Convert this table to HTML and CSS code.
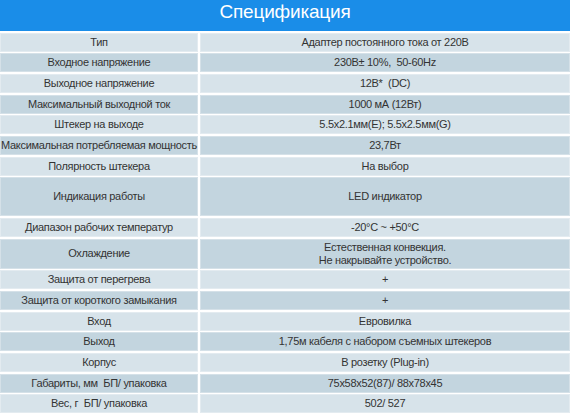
FILE: index.html
```html
<!DOCTYPE html>
<html lang="ru">
<head>
<meta charset="utf-8">
<link rel="stylesheet" href="styles.css">
</head>
<body>
<div class="spec">
  <h1 class="spec-title">Спецификация</h1>
  <div class="spec-grid">
    <div class="cell lt">Тип</div><div class="cell lt">Адаптер постоянного тока от 220В</div>
    <div class="cell dk">Входное напряжение</div><div class="cell dk">230В± 10%,&nbsp; 50-60Hz</div>
    <div class="cell lt">Выходное напряжение</div><div class="cell lt">12В*&nbsp; (DC)</div>
    <div class="cell dk">Максимальный выходной ток</div><div class="cell dk">1000 мА (12Вт)</div>
    <div class="cell lt">Штекер на выходе</div><div class="cell lt">5.5x2.1мм(E); 5.5x2.5мм(G)</div>
    <div class="cell dk">Максимальная потребляемая мощность</div><div class="cell dk">23,7Вт</div>
    <div class="cell lt">Полярность штекера</div><div class="cell lt">На выбор</div>
    <div class="cell dk tall">Индикация работы</div><div class="cell dk tall">LED индикатор</div>
    <div class="cell lt">Диапазон рабочих температур</div><div class="cell lt">-20°C ~ +50°C</div>
    <div class="cell dk mid">Охлаждение</div><div class="cell dk mid">Естественная конвекция.<br>Не накрывайте устройство.</div>
    <div class="cell lt">Защита от перегрева</div><div class="cell lt">+</div>
    <div class="cell dk">Защита от короткого замыкания</div><div class="cell dk">+</div>
    <div class="cell lt">Вход</div><div class="cell lt">Евровилка</div>
    <div class="cell dk">Выход</div><div class="cell dk">1,75м кабеля с набором съемных штекеров</div>
    <div class="cell lt">Корпус</div><div class="cell lt">В розетку (Plug-in)</div>
    <div class="cell dk">Габариты, мм&nbsp; БП/ упаковка</div><div class="cell dk">75x58x52(87)/ 88x78x45</div>
    <div class="cell lt">Вес, г&nbsp; БП/ упаковка</div><div class="cell lt">502/ 527</div>
  </div>
</div>
</body>
</html>
```
FILE: styles.css
```css
html, body {
  margin: 0;
  padding: 0;
  background: #ffffff;
}
.spec {
  width: 570px;
  font-family: "Liberation Sans", Arial, sans-serif;
}
.spec-title {
  margin: 0;
  height: 31px;
  background: #1a8de8;
  color: #ffffff;
  font-weight: normal;
  font-size: 19px;
  line-height: 23px;
  letter-spacing: -0.2px;
  text-align: center;
}
.spec-grid {
  display: grid;
  grid-template-columns: 198px 1fr;
  column-gap: 2px;
  row-gap: 1.67px;
  padding-top: 1.67px;
}
.cell {
  height: 19px;
  display: flex;
  align-items: center;
  justify-content: center;
  text-align: center;
  white-space: nowrap;
  font-size: 11px;
  line-height: 13px;
  letter-spacing: -0.3px;
  color: #333333;
  box-shadow: inset 0 0 0 1px rgba(255, 255, 255, 0.3);
}
.cell.tall { height: 39px; }
.cell.mid { height: 30px; }
.lt { background: #d7e3ea; }
.dk { background: #c3d5df; }
```
